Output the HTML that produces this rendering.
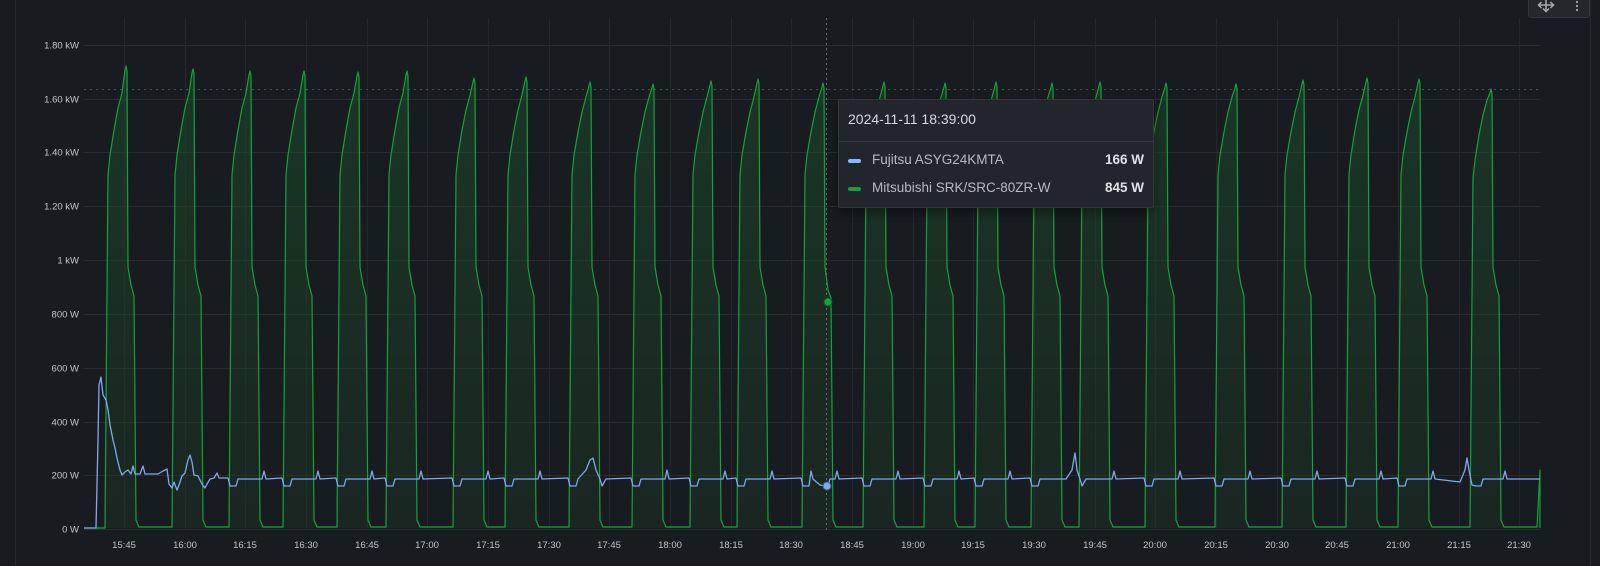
<!DOCTYPE html>
<html><head><meta charset="utf-8"><style>
html,body{margin:0;padding:0;background:#181b1f;}
body{width:1600px;height:566px;overflow:hidden;position:relative;font-family:"Liberation Sans",sans-serif;}
svg{position:absolute;left:0;top:0;}
.tt{position:absolute;left:838px;top:99px;width:316px;height:109px;background:#22252b;border:1px solid #34373d;box-sizing:border-box;border-radius:2px;box-shadow:0 4px 10px rgba(0,0,0,.4);}
.tt .h{position:absolute;left:9px;top:11px;font-size:14px;color:#d8d9dc;font-weight:500;}
.tt .sep{position:absolute;left:0;right:0;top:41px;height:1px;background:#383b41;}
.row{position:absolute;left:9px;right:9px;height:18px;font-size:13.5px;color:#b8bac0;}
.row .sw{position:absolute;left:0;top:7px;width:13px;height:4px;border-radius:2px;}
.row .l{position:absolute;left:24px;top:0;}
.row .v{position:absolute;right:0;top:0;font-weight:bold;color:#e0e1e4;}
.btn{position:absolute;left:1528px;top:-4px;width:62px;height:22px;background:#24272c;border:1px solid #33363c;box-sizing:border-box;border-radius:3px;}
</style></head><body>
<svg width="1600" height="566" viewBox="0 0 1600 566" xmlns="http://www.w3.org/2000/svg">
<defs>
<linearGradient id="gf" x1="0" y1="0" x2="0" y2="1">
<stop offset="0" stop-color="#1c4a2a" stop-opacity="0.6"/>
<stop offset="1" stop-color="#1c3a26" stop-opacity="0.35"/>
</linearGradient>
<path id="g" d="M84,528 L105,528 L108,175 L110,155 L114,130 L118,108 L122,93 L125,70 L126,66 L127,71 L128,267 L131,285 L134,296 L136,520 L139,527 L172,527 L175,175 L177,155 L181,130 L185,108 L189,93 L192,73 L193,69 L194,74 L195,267 L198,285 L201,296 L203,520 L206,527 L229,527 L232,175 L234,155 L238,130 L242,108 L246,93 L249,75 L250,71 L251,76 L252,267 L255,285 L258,296 L260,520 L263,527 L283,527 L286,175 L288,155 L292,130 L296,108 L300,93 L303,75 L304,71 L305,76 L306,267 L309,285 L312,296 L314,520 L317,527 L337,527 L340,175 L342,155 L346,130 L350,108 L354,93 L357,76 L358,72 L359,77 L360,267 L363,285 L366,296 L368,520 L371,527 L386,527 L389,175 L391,155 L395,130 L399,108 L403,93 L406,75 L407,71 L408,76 L409,267 L412,285 L415,296 L417,520 L420,527 L453,527 L456,175 L458,155 L462,130 L466,110 L470,95 L473,82 L474,78 L475,83 L476,267 L479,285 L482,296 L484,520 L487,527 L505,527 L508,175 L510,155 L514,130 L518,110 L522,95 L525,81 L526,77 L527,82 L528,267 L531,285 L534,296 L536,520 L539,527 L569,527 L572,175 L574,155 L578,132 L582,112 L586,97 L589,86 L590,82 L591,87 L592,267 L595,285 L598,296 L600,520 L603,527 L632,527 L635,175 L637,155 L641,132 L645,112 L649,97 L652,88 L653,84 L654,89 L655,267 L658,285 L661,296 L663,520 L666,527 L690,527 L693,175 L695,155 L699,132 L703,112 L707,97 L710,85 L711,81 L712,86 L713,267 L716,285 L719,296 L721,520 L724,527 L737,527 L740,175 L742,155 L746,132 L750,112 L754,97 L757,83 L758,79 L759,84 L760,267 L763,285 L766,296 L768,520 L771,527 L802,527 L805,175 L807,155 L811,132 L815,112 L819,97 L822,87 L823,83 L824,88 L825,267 L828,290 L831,298 L833,520 L836,527 L863,527 L866,175 L868,155 L872,132 L876,112 L880,97 L883,86 L884,82 L885,87 L886,267 L889,285 L892,296 L894,520 L897,527 L924,527 L927,175 L929,155 L933,132 L937,112 L941,97 L944,87 L945,83 L946,88 L947,267 L950,285 L953,296 L955,520 L958,527 L975,527 L978,175 L980,155 L984,132 L988,112 L992,97 L995,86 L996,82 L997,87 L998,267 L1001,285 L1004,296 L1006,520 L1009,527 L1031,527 L1034,175 L1036,155 L1040,132 L1044,112 L1048,97 L1051,87 L1052,83 L1053,88 L1054,267 L1057,285 L1060,296 L1062,520 L1065,527 L1079,527 L1082,175 L1084,155 L1088,132 L1092,112 L1096,97 L1099,86 L1100,82 L1101,87 L1102,267 L1105,285 L1108,296 L1110,520 L1113,527 L1145,527 L1148,175 L1150,155 L1154,132 L1158,112 L1162,97 L1165,87 L1166,83 L1167,88 L1168,267 L1171,285 L1174,296 L1176,520 L1179,527 L1215,527 L1218,175 L1220,155 L1224,132 L1228,112 L1232,97 L1235,88 L1236,84 L1237,89 L1238,267 L1241,285 L1244,296 L1246,520 L1249,527 L1282,527 L1285,175 L1287,155 L1291,132 L1295,112 L1299,97 L1302,84 L1303,80 L1304,85 L1305,267 L1308,285 L1311,296 L1313,520 L1316,527 L1346,527 L1349,175 L1351,155 L1355,130 L1359,110 L1363,95 L1366,82 L1367,78 L1368,83 L1369,267 L1372,285 L1375,296 L1377,520 L1380,527 L1398,527 L1401,175 L1403,155 L1407,132 L1411,112 L1415,97 L1418,83 L1419,79 L1420,84 L1421,267 L1424,285 L1427,296 L1429,520 L1432,527 L1470,527 L1473,178 L1475,160 L1479,135 L1483,115 L1487,100 L1490,93 L1491,89 L1492,94 L1493,267 L1496,285 L1499,296 L1501,520 L1504,527 L1537,527 L1540,470 L1540,528"/>
</defs>
<line x1="15.5" y1="0" x2="15.5" y2="566" stroke="#26282d"/>
<line x1="1590.5" y1="0" x2="1590.5" y2="566" stroke="#26282d"/>
<g stroke="#2a2c31" stroke-width="1">
<line x1="84" y1="45.5" x2="1540" y2="45.5"/>
<line x1="84" y1="99.5" x2="1540" y2="99.5"/>
<line x1="84" y1="152.5" x2="1540" y2="152.5"/>
<line x1="84" y1="206.5" x2="1540" y2="206.5"/>
<line x1="84" y1="260.5" x2="1540" y2="260.5"/>
<line x1="84" y1="314.5" x2="1540" y2="314.5"/>
<line x1="84" y1="368.5" x2="1540" y2="368.5"/>
<line x1="84" y1="422.5" x2="1540" y2="422.5"/>
<line x1="84" y1="475.5" x2="1540" y2="475.5"/>
<line x1="84" y1="529.5" x2="1540" y2="529.5"/>
</g>
<g stroke="#25272c" stroke-width="1">
<line x1="124.5" y1="18" x2="124.5" y2="530"/><line x1="185.5" y1="18" x2="185.5" y2="530"/><line x1="245.5" y1="18" x2="245.5" y2="530"/><line x1="306.5" y1="18" x2="306.5" y2="530"/><line x1="367.5" y1="18" x2="367.5" y2="530"/><line x1="427.5" y1="18" x2="427.5" y2="530"/><line x1="488.5" y1="18" x2="488.5" y2="530"/><line x1="549.5" y1="18" x2="549.5" y2="530"/><line x1="609.5" y1="18" x2="609.5" y2="530"/><line x1="670.5" y1="18" x2="670.5" y2="530"/><line x1="731.5" y1="18" x2="731.5" y2="530"/><line x1="791.5" y1="18" x2="791.5" y2="530"/><line x1="852.5" y1="18" x2="852.5" y2="530"/><line x1="913.5" y1="18" x2="913.5" y2="530"/><line x1="973.5" y1="18" x2="973.5" y2="530"/><line x1="1034.5" y1="18" x2="1034.5" y2="530"/><line x1="1095.5" y1="18" x2="1095.5" y2="530"/><line x1="1155.5" y1="18" x2="1155.5" y2="530"/><line x1="1216.5" y1="18" x2="1216.5" y2="530"/><line x1="1277.5" y1="18" x2="1277.5" y2="530"/><line x1="1337.5" y1="18" x2="1337.5" y2="530"/><line x1="1398.5" y1="18" x2="1398.5" y2="530"/><line x1="1459.5" y1="18" x2="1459.5" y2="530"/><line x1="1519.5" y1="18" x2="1519.5" y2="530"/>
</g>
<line x1="84" y1="89.5" x2="1540" y2="89.5" stroke="#4a4c52" stroke-dasharray="2,4"/>
<g font-size="9.5" fill="#c4c6cc" text-anchor="end" font-family="Liberation Sans, sans-serif">
<text x="79" y="48.5">1.80 kW</text><text x="79" y="102.5">1.60 kW</text><text x="79" y="155.5">1.40 kW</text><text x="79" y="209.5">1.20 kW</text><text x="79" y="263.5">1 kW</text><text x="79" y="317.5">800 W</text><text x="79" y="371.5">600 W</text><text x="79" y="425.5">400 W</text><text x="79" y="478.5">200 W</text><text x="79" y="532.5">0 W</text>
</g>
<g font-size="9.5" fill="#c4c6cc" text-anchor="middle" font-family="Liberation Sans, sans-serif">
<text x="124" y="548">15:45</text><text x="185" y="548">16:00</text><text x="245" y="548">16:15</text><text x="306" y="548">16:30</text><text x="367" y="548">16:45</text><text x="427" y="548">17:00</text><text x="488" y="548">17:15</text><text x="549" y="548">17:30</text><text x="609" y="548">17:45</text><text x="670" y="548">18:00</text><text x="731" y="548">18:15</text><text x="791" y="548">18:30</text><text x="852" y="548">18:45</text><text x="913" y="548">19:00</text><text x="973" y="548">19:15</text><text x="1034" y="548">19:30</text><text x="1095" y="548">19:45</text><text x="1155" y="548">20:00</text><text x="1216" y="548">20:15</text><text x="1277" y="548">20:30</text><text x="1337" y="548">20:45</text><text x="1398" y="548">21:00</text><text x="1459" y="548">21:15</text><text x="1519" y="548">21:30</text>
</g>
<use href="#g" fill="url(#gf)" stroke="none"/>
<use href="#g" fill="none" stroke="#16a23b" stroke-width="1.2" stroke-linejoin="round"/>
<path fill="none" stroke="#7fa9ec" stroke-width="1.3" stroke-linejoin="round" d="M84,528 L96,528 L98,440 L99,385 L101,377 L103,395 L106,400 L108,410 L110,425 L113,440 L115,448 L117,458 L120,470 L122,475 L125,472 L128,470 L131,474 L133,466 L135,474 L140,474 L143,466 L145,474 L158,474 L163,471 L167,469 L169,484 L172,488 L174,482 L177,490 L179,485 L182,476 L185,473 L188,460 L190,455 L192,462 L194,475 L198,476 L202,484 L205,488 L207,484 L210,479 L214,478 L217,473 L219,478 L228,478 L230,486 L236,486 L238,479 L262,479 L264,471 L266,479 L282,478 L284,486 L290,486 L292,479 L316,479 L318,471 L320,479 L336,478 L338,486 L344,486 L346,479 L370,479 L372,471 L374,479 L385,478 L387,486 L393,486 L395,479 L419,479 L421,471 L423,479 L452,478 L454,486 L460,486 L462,479 L486,479 L488,471 L490,479 L504,478 L506,486 L512,486 L514,479 L538,479 L540,471 L542,479 L568,478 L570,486 L576,486 L578,479 L586,470 L590,460 L593,458 L596,470 L600,479 L602,486 L606,479 L631,478 L633,486 L639,486 L641,479 L665,479 L667,470 L669,479 L689,478 L691,486 L697,486 L699,479 L723,479 L725,471 L727,479 L736,478 L738,486 L744,486 L746,479 L770,479 L772,471 L774,479 L801,478 L803,486 L809,486 L811,471 L813,479 L820,485 L824,486 L828,486 L830,479 L835,479 L837,471 L839,479 L862,478 L864,486 L870,486 L872,479 L896,479 L898,471 L900,479 L923,478 L925,486 L931,486 L933,479 L957,479 L959,471 L961,479 L974,478 L976,486 L982,486 L984,479 L1008,479 L1010,471 L1012,479 L1030,478 L1032,486 L1038,486 L1040,479 L1064,479 L1066,479 L1072,470 L1075,453 L1077,470 L1080,479 L1082,486 L1086,479 L1112,479 L1114,471 L1116,479 L1144,478 L1146,486 L1152,486 L1154,479 L1178,479 L1180,471 L1182,479 L1214,478 L1216,486 L1222,486 L1224,479 L1248,479 L1250,471 L1252,479 L1281,478 L1283,486 L1289,486 L1291,479 L1315,479 L1317,471 L1319,479 L1345,478 L1347,486 L1353,486 L1355,479 L1379,479 L1381,471 L1383,479 L1397,478 L1399,486 L1405,486 L1407,479 L1431,479 L1433,471 L1435,479 L1460,482 L1465,470 L1467,458 L1469,470 L1472,485 L1476,486 L1481,486 L1483,479 L1503,479 L1505,471 L1507,479 L1540,479"/>
<line x1="826.5" y1="18" x2="826.5" y2="530" stroke="#6a6c72" stroke-dasharray="2,3"/>
<circle cx="828" cy="302" r="4" fill="#16a23b" stroke="#0d5a22" stroke-width="1"/>
<circle cx="827" cy="486" r="4" fill="#7fa9ec" stroke="#3d5a88" stroke-width="1"/>
</svg>
<div class="tt">
<div class="h">2024-11-11 18:39:00</div>
<div class="sep"></div>
<div class="row" style="top:52px"><div class="sw" style="background:#8ab8ff"></div><div class="l">Fujitsu ASYG24KMTA</div><div class="v">166 W</div></div>
<div class="row" style="top:80px"><div class="sw" style="background:#16a23b"></div><div class="l">Mitsubishi SRK/SRC-80ZR-W</div><div class="v">845 W</div></div>
</div>
<div class="btn">
<svg width="62" height="22" viewBox="0 0 62 22" style="position:absolute;left:-1px;top:-1px">
<g stroke="#a8aab0" stroke-width="1.5" fill="none">
<line x1="11" y1="9" x2="25" y2="9"/><line x1="18" y1="3" x2="18" y2="15"/>
<path d="M15,12.5 L18,15.5 L21,12.5"/><path d="M13.5,6 L10.5,9 L13.5,12"/><path d="M22.5,6 L25.5,9 L22.5,12"/>
</g>
<circle cx="49" cy="6" r="1.1" fill="#a8aab0"/><circle cx="49" cy="10" r="1.1" fill="#a8aab0"/><circle cx="49" cy="14" r="1.1" fill="#a8aab0"/>
</svg>
</div>
</body></html>
